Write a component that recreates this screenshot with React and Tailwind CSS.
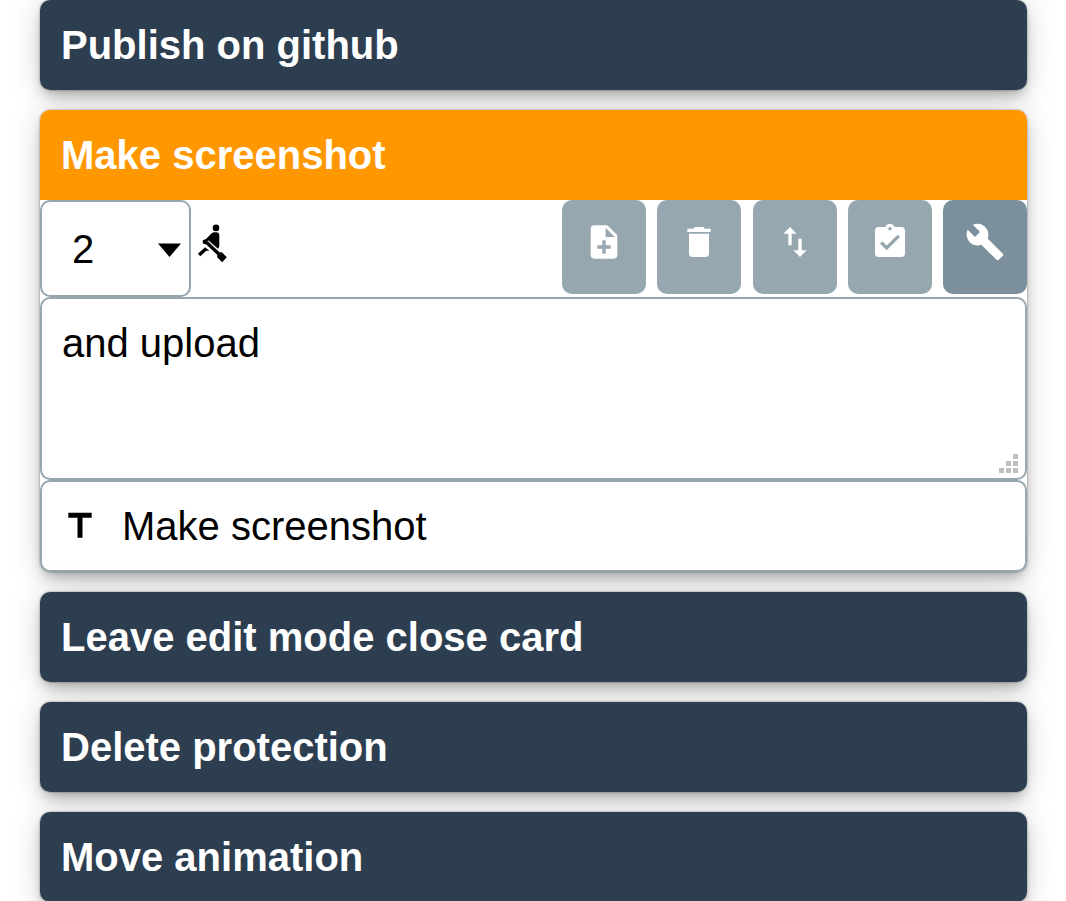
import {
  MdNoteAdd,
  MdDelete,
  MdSwapVert,
  MdAssignmentTurnedIn,
  MdBuild,
  MdTitle,
} from "react-icons/md";

const shadow =
  "shadow-[0_0_2px_rgba(0,0,0,0.5),0_8px_14px_-4px_rgba(0,0,0,0.3),0_3px_32px_rgba(0,0,0,0.16)]";

const tools = [
  { label: "Add card", Icon: MdNoteAdd },
  { label: "Delete card", Icon: MdDelete },
  { label: "Move card", Icon: MdSwapVert },
  { label: "Mark as done", Icon: MdAssignmentTurnedIn },
  { label: "Edit card", Icon: MdBuild, active: true },
];

function RowingIcon({ className }) {
  return (
    <svg className={className} viewBox="0 0 40 40" aria-hidden="true">
      <circle cx="25" cy="4.9" r="3.3" />
      <path d="M11.8 17.2L15 16l5.2-5.2c1-1 2-1.5 3.3-1.5h1.8c1.8 0 3 1.2 3 3v10.2c0 1.3-.4 2.3-1.3 3.3l-9.4-8.2-4.2 2z" />
      <path d="M11.8 17.2v3.2l3.4 1 11 10.400v2.500l4.900 4.900 4.700-5-4.900-4.900h-2.500L17.200 18.600z" />
      <path d="M14.100 24.200L6.900 30.700l2.400 2.600 5.900-5.600h3.300z" />
    </svg>
  );
}

function CardTitle({ children, active }) {
  return (
    <h2
      className={`${active ? "rounded-t-[10px] bg-[#ff9800]" : "rounded-[10px] bg-[#2c3e50]"} px-[21px] py-[15px] text-[40px] leading-[60px] font-bold text-white`}
    >
      {children}
    </h2>
  );
}

function Card({ title }) {
  return (
    <article className={`rounded-[10px] ${shadow}`}>
      <CardTitle>{title}</CardTitle>
    </article>
  );
}

function ToolButton({ label, Icon, active }) {
  return (
    <button
      type="button"
      aria-label={label}
      className={`flex h-[94px] w-[84px] justify-center rounded-[10px] pt-[22px] text-white ${active ? "bg-[#7b909c]" : "bg-[#96a7b0]"}`}
    >
      <Icon className="size-10" aria-hidden="true" />
    </button>
  );
}

function EditCard() {
  return (
    <article className={`rounded-[10px] bg-white ${shadow}`}>
      <CardTitle active>Make screenshot</CardTitle>
      <div className="flex items-start justify-between">
        <div className="flex items-start">
          <div className="relative">
            <select
              aria-label="Size"
              defaultValue="2"
              className="h-[97px] w-[151px] appearance-none rounded-[10px] border-2 border-[#96a7b0] bg-white pl-[30px]"
            >
              <option>1</option>
              <option>2</option>
              <option>3</option>
            </select>
            <svg
              className="pointer-events-none absolute top-[43px] right-[10px] h-[14px] w-[23px]"
              viewBox="0 0 23 14"
              aria-hidden="true"
            >
              <path d="M0 0.5h23L11.5 14z" />
            </svg>
          </div>
          <RowingIcon className="mt-[23px] size-10" />
        </div>
        <div className="flex w-[465px] justify-between">
          {tools.map((tool) => (
            <ToolButton key={tool.label} {...tool} />
          ))}
        </div>
      </div>
      <div className="relative">
        <textarea
          aria-label="Notes"
          defaultValue="and upload"
          className="block h-[183px] w-full resize-none rounded-[10px] border-2 border-[#96a7b0] bg-white px-5 py-[14px] leading-[60px]"
        />
        <svg
          className="pointer-events-none absolute right-[9px] bottom-[7px] h-5 w-5"
          viewBox="0 0 20 20"
          fill="#bfbfbf"
          aria-hidden="true"
        >
          <path d="M15 1h5v5h-5zM8 8h5v5H8zM15 8h5v5h-5zM1 15h5v5H1zM8 15h5v5H8zM15 15h5v5h-5z" />
        </svg>
      </div>
      <label className="flex h-[92px] items-center gap-[22px] rounded-[10px] border-2 border-[#96a7b0] bg-white px-[18px]">
        <MdTitle className="size-10 shrink-0" aria-hidden="true" />
        <input
          type="text"
          aria-label="Title"
          defaultValue="Make screenshot"
          className="min-w-0 flex-1 bg-transparent outline-none"
        />
      </label>
    </article>
  );
}

export default function App() {
  return (
    <main className="min-h-screen bg-white font-['Liberation_Sans',Arial,sans-serif] text-[40px] text-black">
      <div className="flex flex-col gap-5 pr-[39px] pl-10">
        <Card title="Publish on github" />
        <EditCard />
        <Card title="Leave edit mode close card" />
        <Card title="Delete protection" />
        <Card title="Move animation" />
      </div>
    </main>
  );
}
